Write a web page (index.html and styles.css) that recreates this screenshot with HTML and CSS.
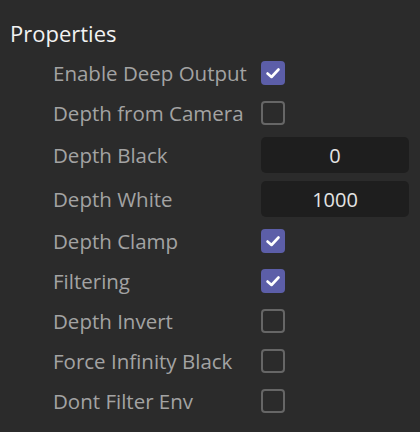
FILE: index.html
```html
<!DOCTYPE html>
<html>
<head>
<meta charset="utf-8">
<link rel="stylesheet" href="styles.css">
</head>
<body>
<div class="panel">
  <div class="title">Properties</div>
  <div class="rows">
    <div class="row"><span class="label">Enable Deep Output</span><span class="cb on"><svg viewBox="0 0 24 24"><path d="M6.5 12.5 L10.5 16 L17.5 8.5"/></svg></span></div>
    <div class="row"><span class="label">Depth from Camera</span><span class="cb"></span></div>
    <div class="row field-row"><span class="label">Depth Black</span><span class="field">0</span></div>
    <div class="row field-row"><span class="label">Depth White</span><span class="field">1000</span></div>
    <div class="row"><span class="label">Depth Clamp</span><span class="cb on"><svg viewBox="0 0 24 24"><path d="M6.5 12.5 L10.5 16 L17.5 8.5"/></svg></span></div>
    <div class="row"><span class="label">Filtering</span><span class="cb on"><svg viewBox="0 0 24 24"><path d="M6.5 12.5 L10.5 16 L17.5 8.5"/></svg></span></div>
    <div class="row"><span class="label">Depth Invert</span><span class="cb"></span></div>
    <div class="row"><span class="label">Force Infinity Black</span><span class="cb"></span></div>
    <div class="row"><span class="label">Dont Filter Env</span><span class="cb"></span></div>
  </div>
</div>
</body>
</html>
```
FILE: styles.css
```css
html, body {
  margin: 0;
  padding: 0;
  background: #2b2b2b;
}
.panel {
  width: 420px;
  height: 432px;
  box-sizing: border-box;
  padding: 17px 0 0 10px;
  font-family: "Open Sans", "Noto Sans", sans-serif;
}
.title {
  color: #f2f2f2;
  font-size: 22px;
  line-height: 32px;
  height: 36px;
}
.rows {
  display: flex;
  flex-direction: column;
  padding-left: 43px;
}
.row {
  display: flex;
  align-items: center;
  height: 40px;
}
.row.field-row {
  height: 44px;
}
.label {
  width: 208px;
  color: #a3a3a3;
  font-size: 20.5px;
  white-space: nowrap;
}
.cb {
  width: 24px;
  height: 24px;
  box-sizing: border-box;
  border: 2.5px solid #666666;
  border-radius: 4px;
  display: flex;
}
.cb.on {
  background: #5c5ea8;
  border: none;
}
.cb svg {
  width: 24px;
  height: 24px;
}
.cb path {
  fill: none;
  stroke: #ffffff;
  stroke-width: 2.6;
  stroke-linecap: round;
  stroke-linejoin: round;
}
.field {
  width: 148px;
  height: 36px;
  background: #1e1e1e;
  border-radius: 5px;
  color: #e4e4e4;
  font-size: 20px;
  display: flex;
  align-items: center;
  justify-content: center;
}
```
